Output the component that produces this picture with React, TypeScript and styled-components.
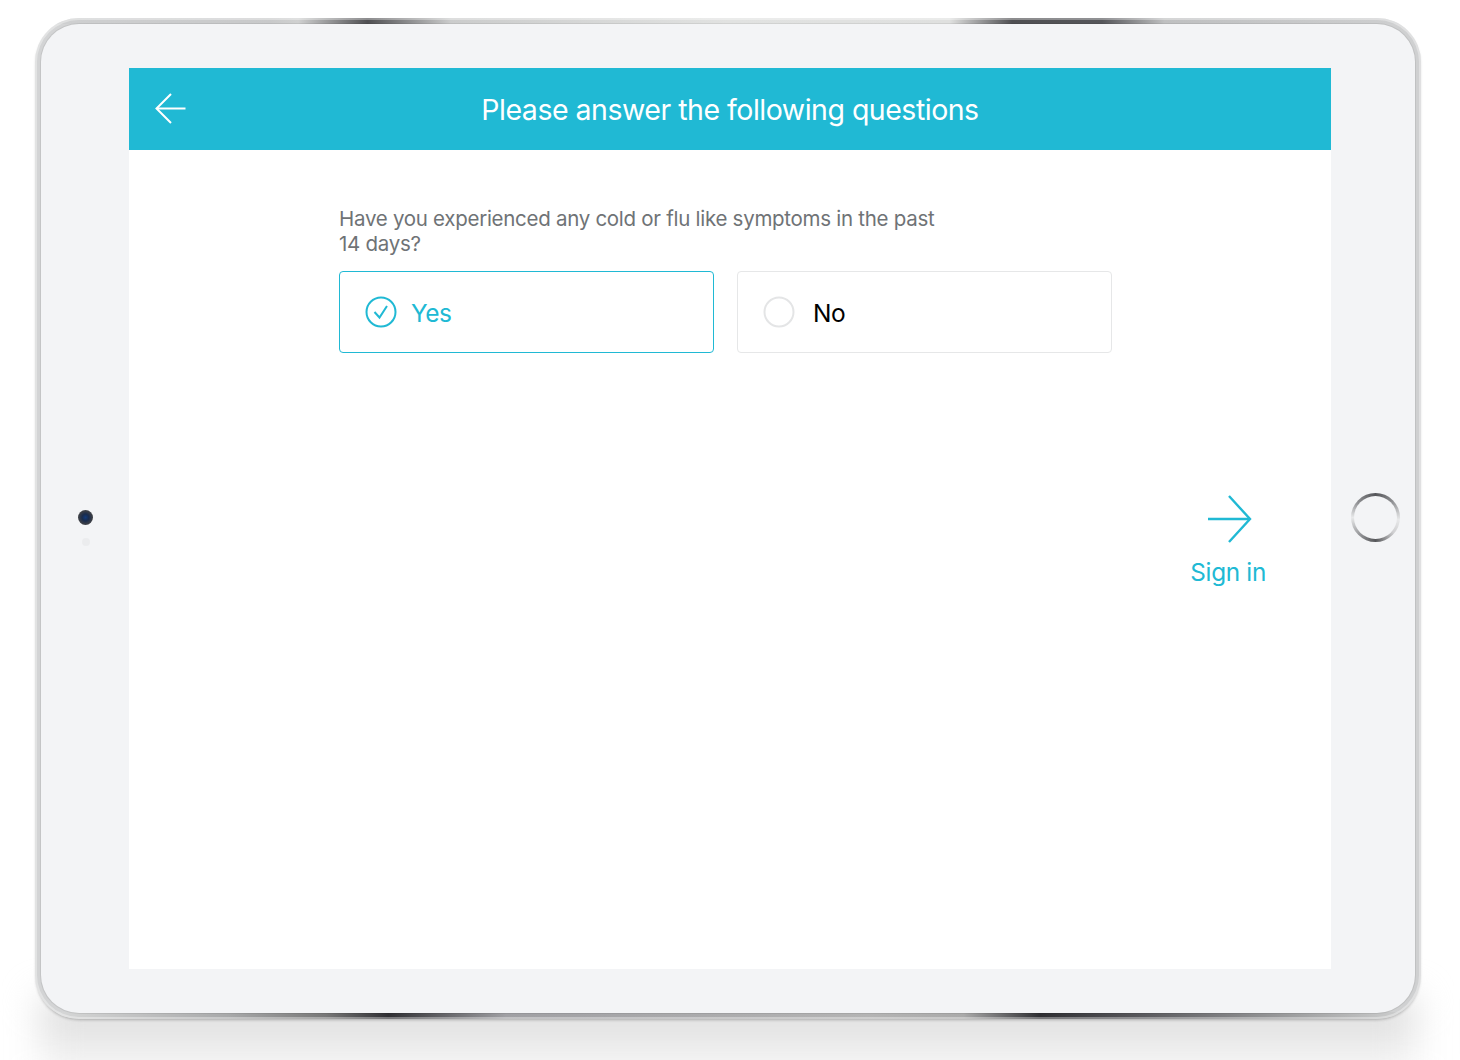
import styled, { createGlobalStyle } from "styled-components";

const GlobalStyle = createGlobalStyle`
  html, body {
    margin: 0;
    padding: 0;
    background: #fff;
    font-family: Inter, "Liberation Sans", sans-serif;
  }
`;

const Page = styled.div`
  width: 1460px;
  height: 1060px;
  padding: 18px 39px 0 35px;
  box-sizing: border-box;
  overflow: hidden;
  display: flex;
  flex-direction: column;
`;

const Device = styled.div`
  height: 1001px;
  flex: none;
  box-sizing: border-box;
  padding: 6px;
  border-radius: 44px;
  background:
    linear-gradient(90deg, #cfd0d1 0, #c8c9ca 17%, #cfd0d0 19%, #4f4f52 24%, #cbcccc 30%, #e1e2e1 50%, #dfe0df 66%, #4f4f52 70.5%, #55565a 77%, #bfc0c1 81.5%, #cfd0d1 100%) top / 100% 6px no-repeat,
    linear-gradient(90deg, #dcdddd 0, #a8a9aa 14%, #777 21%, #2f2f33 25.5%, #a0a0a4 34%, #b4b4b4 60%, #aaa 67%, #2e2e32 72.5%, #5a5a5e 80%, #a5a6a7 92%, #d5d6d6 100%) bottom / 100% 7px no-repeat,
    linear-gradient(90deg, #d3d4d5, #cfd0d1);
  box-shadow: inset 0 0 0 2px rgba(255, 255, 255, 0.35), 0 2px 3px -1px rgba(0, 0, 0, 0.25);
  position: relative;
  z-index: 1;
`;

const Bezel = styled.div`
  height: 100%;
  display: flex;
  border-radius: 38px;
  background: #f3f4f6;
  box-sizing: border-box;
  padding: 44px 0 44px;
  box-shadow: 0 0 0 1px rgba(0, 0, 0, 0.07);
`;

const LeftSide = styled.div`
  width: 88px;
  display: flex;
  flex-direction: column;
  align-items: center;
  justify-content: center;
  gap: 13px;
  padding: 19px 0 0 1px;
  box-sizing: border-box;
`;

const Camera = styled.div`
  width: 15px;
  height: 15px;
  border-radius: 50%;
  background: radial-gradient(circle, #123a7a 0, #1a2c4c 32%, #3b3e45 62%, #5a5d63 100%);
`;

const Sensor = styled.div`
  width: 8px;
  height: 8px;
  border-radius: 50%;
  background: #ebecee;
`;

const RightSide = styled.div`
  width: 84px;
  display: flex;
  align-items: center;
  justify-content: center;
  padding: 0 0 3px 4px;
  box-sizing: border-box;
`;

const HomeButton = styled.div`
  width: 49px;
  height: 49px;
  box-sizing: border-box;
  padding: 3px;
  border-radius: 50%;
  background: conic-gradient(#55565a 0deg, #8c8d90 45deg, #e8e9ea 95deg, #cfcfd1 130deg, #56575a 180deg, #909194 220deg, #e8e9ea 270deg, #8f9093 310deg, #55565a 360deg);
`;

const HomeFace = styled.div`
  height: 100%;
  border-radius: 50%;
  background: #f3f4f6;
`;

const Screen = styled.div`
  width: 1202px;
  display: flex;
  flex-direction: column;
  background: #fff;
`;

const Header = styled.header`
  height: 82px;
  flex: none;
  display: grid;
  grid-template-columns: 1fr auto 1fr;
  align-items: center;
  padding: 0 26px;
  background: #20b9d4;
  color: #fff;
`;

const BackIcon = styled.svg`
  display: block;
`;

const Title = styled.h1`
  margin: 0;
  padding-top: 1px;
  font-size: 28.5px;
  line-height: 36px;
  font-weight: 400;
  letter-spacing: -0.49px;
`;

const Content = styled.main`
  flex: 1;
  display: flex;
  flex-direction: column;
  padding: 56px 65px 0 210px;
`;

const Question = styled.p`
  width: 620px;
  margin: 0 0 15px;
  font-size: 20.5px;
  line-height: 25px;
  color: #6f7376;
  letter-spacing: -0.28px;
`;

const Options = styled.div`
  display: flex;
  gap: 23px;
`;

const Option = styled.div<{ $selected?: boolean }>`
  width: 375px;
  height: 82px;
  box-sizing: border-box;
  display: flex;
  align-items: center;
  gap: ${props => (props.$selected ? "14px" : "18px")};
  padding-left: 25px;
  border-radius: 4px;
  border: 1px solid ${props => (props.$selected ? "#20b9d4" : "#e6e7e8")};
  color: ${props => (props.$selected ? "#20b9d4" : "#000")};
  font-size: 24.5px;
  letter-spacing: -0.5px;
`;

const OptionLabel = styled.span`
  padding-top: 2px;
`;

const Radio = styled.svg`
  display: block;
  flex: none;
`;

const SignIn = styled.div`
  align-self: flex-end;
  margin-top: 142px;
  display: flex;
  flex-direction: column;
  align-items: center;
  gap: 13px;
  color: #20b9d4;
  font-size: 24.3px;
  line-height: 32px;
  letter-spacing: -0.3px;
`;

const ForwardIcon = styled.svg`
  display: block;
  margin-left: 3px;
`;

const FloorShadow = styled.div`
  height: 90px;
  flex: none;
  margin: -20px 5px 0;
  background: linear-gradient(180deg, #d4d4d4, #f5f5f5 68%, #f8f8f8);
  filter: blur(18px);
`;

export default function App() {
  return (
    <>
      <GlobalStyle />
      <Page>
        <Device>
          <Bezel>
            <LeftSide>
              <Camera />
              <Sensor />
            </LeftSide>
            <Screen>
              <Header>
                <BackIcon width="32" height="32" viewBox="0 0 32 32" fill="none" stroke="#fff" strokeWidth="2">
                  <path d="M30.5 15.5H2" />
                  <path d="M16 1L1.5 15.5L16 30" />
                </BackIcon>
                <Title>Please answer the following questions</Title>
              </Header>
              <Content>
                <Question>
                  Have you experienced any cold or flu like symptoms in the past
                  <br />
                  14 days?
                </Question>
                <Options>
                  <Option $selected>
                    <Radio width="32" height="32" viewBox="0 0 32 32" fill="none" stroke="#20b9d4" strokeWidth="2">
                      <circle cx="16" cy="16" r="14.5" />
                      <path d="M9.5 16L14.5 21.5L22 10" />
                    </Radio>
                    <OptionLabel>Yes</OptionLabel>
                  </Option>
                  <Option>
                    <Radio width="32" height="32" viewBox="0 0 32 32" fill="none" stroke="#e4e5e6" strokeWidth="2">
                      <circle cx="16" cy="16" r="14.5" />
                    </Radio>
                    <OptionLabel>No</OptionLabel>
                  </Option>
                </Options>
                <SignIn>
                  <ForwardIcon width="44" height="48" viewBox="0 0 44 48" fill="none" stroke="#20b9d4" strokeWidth="2.4">
                    <path d="M0 24H42" />
                    <path d="M21 1L42 24L21 47" />
                  </ForwardIcon>
                  Sign in
                </SignIn>
              </Content>
            </Screen>
            <RightSide>
              <HomeButton>
                <HomeFace />
              </HomeButton>
            </RightSide>
          </Bezel>
        </Device>
        <FloorShadow />
      </Page>
    </>
  );
}
